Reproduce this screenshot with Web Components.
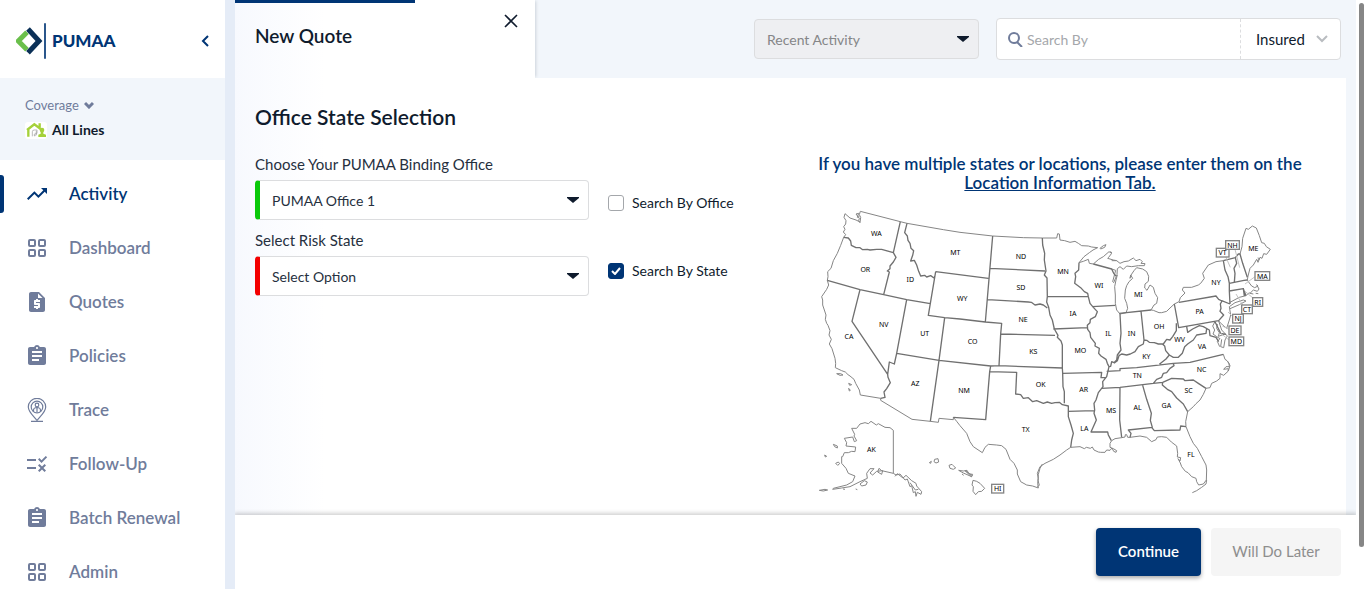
<!DOCTYPE html>
<html lang="en">
<head>
<meta charset="utf-8">
<title>PUMAA - New Quote</title>
<style>
  html, body { margin: 0; height: 100%; }
  body {
    --navy: #003575; --ink: #0f1b2d; --slate: #707c9b; --mist: #f2f6fb; --line: #dcdddf;
    font-family: Lato, "Open Sans", sans-serif; font-size: 15px; color: var(--ink); background: #fff;
  }
</style>
</head>
<body>
<quote-app></quote-app>
<script>
const ICONS = {
  trend: '<path d="M16 6l2.29 2.29-4.88 4.88-4-4L2 16.59 3.41 18l6-6 4 4 6.3-6.29L22 12V6z"/>',
  grid: '<g fill="none" stroke="currentColor" stroke-width="2"><rect x="4" y="4" width="6" height="6" rx="1"/><rect x="14" y="4" width="6" height="6" rx="1"/><rect x="4" y="14" width="6" height="6" rx="1"/><rect x="14" y="14" width="6" height="6" rx="1"/></g>',
  quote: '<path d="M14 2H6c-1.1 0-1.99.9-1.99 2L4 20c0 1.1.89 2 1.99 2H18c1.1 0 2-.9 2-2V8l-6-6zm1 10h-4v1h3c.55 0 1 .45 1 1v3c0 .55-.45 1-1 1h-1v1h-2v-1H9v-2h4v-1h-3c-.55 0-1-.45-1-1v-3c0-.55.45-1 1-1h1V9h2v1h2v2zm-2-4V3.5L17.5 8H13z"/>',
  clipboard: '<path d="M19 3h-4.18C14.4 1.84 13.3 1 12 1c-1.3 0-2.4.84-2.82 2H5c-1.1 0-2 .9-2 2v14c0 1.1.9 2 2 2h14c1.1 0 2-.9 2-2V5c0-1.1-.9-2-2-2zm-7 0c.55 0 1 .45 1 1s-.45 1-1 1-1-.45-1-1 .45-1 1-1zm2 14H7v-2h7v2zm3-4H7v-2h10v2zm0-4H7V7h10v2z"/>',
  pin: '<g fill="none" stroke="currentColor" stroke-width="1.2"><path d="M12 22.5C9 18.5 3.3 14 3.3 9a8.700 8.700 0 0 1 17.400 0c0 5-5.700 9.500-8.700 13.500z"/><circle cx="12" cy="9" r="5.800"/><circle cx="12" cy="7" r="1.800"/><path d="M8.500 13.500v-1c0-2 1.500-3 3.500-3s3.500 1 3.500 3v1M12 10v4M6 23.300h12"/></g>',
  rule: '<path d="M16.54 11L13 7.46l1.41-1.41 2.12 2.12 4.24-4.24 1.41 1.41L16.54 11zM11 7H2v2h9V7zm10 6.41L19.59 12 17 14.59 14.41 12 13 13.41 15.59 16 13 18.59 14.41 20 17 17.41 19.59 20 21 18.59 18.41 16 21 13.41zM11 15H2v2h9v-2z"/>'
};

class BaseElement extends HTMLElement {
  constructor() { super(); this.attachShadow({ mode: 'open' }); }
  connectedCallback() { this.shadowRoot.innerHTML = this.render(); }
}

customElements.define('brand-logo', class extends BaseElement {
  render() { return `<style>
    :host { display: flex; align-items: center; gap: 6px; color: var(--navy); font-size: 17px; font-weight: 900; line-height: 24px; }
    svg { display: block; }
    </style>
    <svg width="30" height="36" viewBox="0 0 90 108" aria-hidden="true" fill="none">
      <path d="M33 28L7 54l26 26" stroke="#6abf4b" stroke-width="15"/>
      <path d="M36 18l33 36-33 35" stroke="#0b3057" stroke-width="15"/>
      <path d="M87 1v106" stroke="#003575" stroke-width="5"/>
    </svg><span>PUMAA</span>`; }
});

customElements.define('nav-item', class extends BaseElement {
  render() { return `<style>
    :host { display: block; color: var(--slate); }
    a { display: flex; align-items: center; gap: 20px; height: 54px; padding-left: 25px; color: inherit; text-decoration: none;
        font-size: 17px; font-weight: 600; line-height: 24px; }
    :host([active]) { color: var(--navy); }
    :host([active]) a { padding-left: 0; }
    :host([active]) a::before { content: ""; width: 4px; height: 38px; margin-right: 1px; border-radius: 0 3px 3px 0; background: var(--navy); }
    svg { fill: currentColor; flex: none; }
    </style>
    <a href="#"><svg width="24" height="24" viewBox="0 0 24 24" aria-hidden="true">${ICONS[this.getAttribute('icon')]}</svg><slot></slot></a>`; }
});

customElements.define('side-bar', class extends BaseElement {
  render() { return `<style>
    :host { display: block; background: #fff; }
    header { display: flex; align-items: center; justify-content: space-between; height: 78px; padding: 4px 15px 0 16px; box-sizing: border-box; }
    button { font: inherit; border: 0; background: none; padding: 0; cursor: pointer; display: flex; }
    .coverage { display: flex; flex-direction: column; align-items: flex-start; gap: 5px; height: 82px; padding: 17px 25px 0; box-sizing: border-box; background: var(--mist); }
    .coverage button { align-items: center; gap: 5px; font-size: 13px; line-height: 20px; color: var(--slate); }
    .line { display: flex; align-items: center; gap: 5px; font-size: 14px; font-weight: 700; line-height: 20px; }
    nav { padding-top: 7px; }
    </style>
    <header><brand-logo></brand-logo>
      <button aria-label="Collapse menu"><svg width="10" height="14" viewBox="0 0 10 14" fill="none" stroke="#003575" stroke-width="2"><path d="M8 2L3 7l5 5"/></svg></button>
    </header>
    <section class="coverage">
      <button>Coverage <svg width="10" height="8" viewBox="0 0 10 8" fill="none" stroke="currentColor" stroke-width="3"><path d="M1 2l4 4 4-4"/></svg></button>
      <div class="line"><svg width="22" height="17" viewBox="0 0 66 51" aria-hidden="true"><rect width="66" height="51" rx="9" fill="#fff"/>
        <path d="M6 24L28 7l19 14M10 21v23M44 4v12" fill="none" stroke="#a5d13a" stroke-width="7"/><circle cx="51" cy="24" r="7" fill="#a5d13a"/><path d="M40 45v-7l7-3V26h8v9l8 3v7z" fill="#a5d13a"/>
        <path d="M22 43V29q0-5 6-5h8v10h-7M29 43v-6M34 27v12h-8" fill="none" stroke="#999" stroke-width="2"/></svg>All Lines</div>
    </section>
    <nav>
      <nav-item icon="trend" active>Activity</nav-item>
      <nav-item icon="grid">Dashboard</nav-item>
      <nav-item icon="quote">Quotes</nav-item>
      <nav-item icon="clipboard">Policies</nav-item>
      <nav-item icon="pin">Trace</nav-item>
      <nav-item icon="rule">Follow-Up</nav-item>
      <nav-item icon="clipboard">Batch Renewal</nav-item>
      <nav-item icon="grid">Admin</nav-item>
    </nav>`; }
});

customElements.define('select-field', class extends BaseElement {
  render() {
    const label = this.getAttribute('label');
    const hidden = this.hasAttribute('hide-label');
    return `<style>
    :host { display: block; }
    label { display: block; line-height: 20px; margin-bottom: 6px; color: #26303e; }
    .box { display: grid; align-items: center; }
    select, svg { grid-area: 1 / 1; }
    select { appearance: none; width: 100%; height: 40px; box-sizing: border-box; margin: 0; padding: 0 36px 0 12px; border: 1px solid var(--line);
      border-left: 5px solid var(--mark, var(--line)); border-radius: 4px; background: #fff; color: #26303e; font: inherit; font-size: 14px; opacity: 1; }
    :host([hide-label]) select { border-left-width: 1px; background: #eeeff2; color: #858688; }
    svg { justify-self: end; margin-right: 10px; pointer-events: none; }
    </style>
    ${hidden ? '' : `<label for="s">${label}</label>`}
    <div class="box"><select id="s" ${hidden ? `aria-label="${label}"` : ''}><option>${this.getAttribute('value')}</option></select>
    <svg width="12" height="6" viewBox="0 0 12 6" aria-hidden="true"><path d="M0 0h12v1L6 6 0 1z" fill="#0f1b2d"/></svg></div>`; }
});

customElements.define('check-field', class extends BaseElement {
  render() { return `<style>
    :host { display: block; }
    label { display: flex; align-items: center; gap: 8px; line-height: 20px; font-size: 14px; }
    input { appearance: none; display: grid; width: 16px; height: 16px; box-sizing: border-box; margin: 0; border: 1px solid #a4a7ab; border-radius: 3px; background: #fff; }
    input:checked { border-color: var(--navy); background: var(--navy); }
    span { display: grid; align-items: center; justify-items: center; }
    input, svg { grid-area: 1 / 1; }
    svg { pointer-events: none; }
    </style>
    <label><span><input type="checkbox" ${this.hasAttribute('checked') ? 'checked' : ''}>
    ${this.hasAttribute('checked') ? '<svg width="10" height="8" viewBox="0 0 10 8" fill="none" stroke="#fff" stroke-width="2"><path d="M1 4l3 3 5-6"/></svg>' : ''}</span><slot></slot></label>`; }
});

customElements.define('search-box', class extends BaseElement {
  render() { return `<style>
    :host { display: flex; align-items: center; width: 345px; height: 42px; box-sizing: border-box; border: 1px solid var(--line); border-radius: 4px; background: #fff; }
    .query { display: flex; flex: 1; align-items: center; gap: 4px; padding-left: 10px; min-width: 0; }
    input { flex: 1; min-width: 0; border: 0; padding: 0; background: none; font: inherit; font-size: 14px; outline: 0; }
    input::placeholder { color: #a5a7ab; opacity: 1; }
    .kind { display: grid; align-items: center; width: 100px; height: 40px; box-sizing: border-box; border-left: 1px dashed var(--line); }
    select, .kind svg { grid-area: 1 / 1; }
    select { appearance: none; width: 100%; height: 38px; border: 0; margin: 0; padding: 0 0 0 15px; background: none; font: inherit; color: var(--ink); }
    .kind svg { justify-self: end; margin-right: 12px; pointer-events: none; }
    </style>
    <div class="query"><svg width="16" height="16" viewBox="0 0 16 16" fill="none" stroke="#707c9b" stroke-width="2"><circle cx="7" cy="7" r="5"/><path d="M10 11l5 5"/></svg>
      <input type="search" aria-label="Search" placeholder="Search By"></div>
    <div class="kind"><select aria-label="Search type"><option>Insured</option></select>
      <svg width="12" height="8" viewBox="0 0 12 8" fill="none" stroke="#b9bcc0" stroke-width="2"><path d="M1 1l5 5 5-5"/></svg></div>`; }
});

customElements.define('top-bar', class extends BaseElement {
  render() { return `<style>
    :host { display: flex; justify-content: space-between; height: 78px; background: linear-gradient(90deg, transparent 300px, var(--mist) 300px); }
    .tab { display: flex; justify-content: space-between; align-items: flex-start; width: 300px; box-sizing: border-box; padding: 0 17px 0 20px;
      background: linear-gradient(var(--navy), var(--navy)) 0 0 / 180px 3px no-repeat; box-shadow: 2px 0 3px -1px #ccd2da; clip-path: inset(0 -5px 0 0); }
    h1 { margin: 24px 0 0; font-size: 19px; font-weight: 600; line-height: 24px; }
    button { border: 0; padding: 0; margin-top: 14px; background: none; display: flex; }
    .tools { display: flex; align-items: center; gap: 17px; padding-right: 15px; }
    select-field { width: 225px; }
    </style>
    <div class="tab"><h1>New Quote</h1><button aria-label="Close tab"><svg width="14" height="14" viewBox="0 0 14 14" stroke="#0f1b2d" stroke-width="1.6"><path d="M1 1l12 12M13 1L1 13"/></svg></button></div>
    <div class="tools"><select-field hide-label label="Recent activity" value="Recent Activity"></select-field><search-box></search-box></div>`; }
});

/* Map geometry is drawn on a 1500 x 915 grid, three units to the pixel. */
const STATE_LABELS = [
  ['WA',199,107],['MT',436,164],['OR',166,215],['ID',301,245],['WY',457,302],['NV',221,380],['UT',344,408],['CA',117,416],
  ['ND',633,176],['SD',633,269],['MN',759,222],['WI',867,263],['NE',639,365],['IA',789,347],['IL',895,407],['CO',488,433],
  ['KS',670,461],['MO',811,458],['OK',692,560],['AR',821,575],['NM',462,578],['MS',903,638],['LA',823,692],['TX',647,695],
  ['AZ',316,557],['AK',184,755],['MI',985,290],['OH',1047,386],['IN',965,407],['PA',1169,341],['WV',1109,427],['VA',1176,448],
  ['NY',1218,254],['ME',1330,152],['KY',1009,476],['TN',982,533],['NC',1175,515],['SC',1136,578],['AL',983,629],['GA',1069,623],['FL',1143,770]
];
const BOXED_LABELS = [
  ['VT',1219,145,38],['NH',1247,122,41],['MA',1335,215,44],['RI',1328,293,30],['CT',1295,315,32],['NJ',1268,343,32],['DE',1257,378,36],['MD',1257,411,44],['HI',545,853,36]
];
const COAST = `
M151 34L271 65 291 70 400 89 450 97 548 108 640 113 697 114 740 114 743 101 748 102 750 120 764 122 780 127 795 124 805 130 815 137 835 138 845 141 863 143 849 150 838 158 822 170 807 188 820 184 835 178 838 190 850 192 866 178 880 170 897 155 905 160 896 172 893 175 910 180 920 182
M870 145L880 137 888 134 884 142 872 147zM151 34L148 44 152 52 150 68 146 62 148 55 138 42 146 40 142 52 148 50M150 66L138 60 120 54 105 41 102 52 108 62 107 72 101 80 105 88 100 96 107 104 101 112 92 136 82 160 70 182 63 205 53 215 54 230 52 241 56 255 50 268 35 290 38 300 38 315 48 345 46 358 50 370 54 376 60 392 57 405 64 418 58 432 66 446 75 475 77 490 76 503 95 512 106 516 114 524 120 528 132 538 137 550 148 570 151 585 212 595 212 601 306 658 361 664 385 667 387 655 430 659 430 652 440 664 450 677 470 700 480 725 490 740 517 758 525 742 535 733 560 735 575 737 588 748 600 778 612 790 622 810 622 822 632 845 650 855 668 858 685 864 683 850 685 835 682 820 690 800 705 790 730 778 750 765 770 750 782 742 810 740 823 746 829 742 841 745 847 741 852 750 865 756 872 757 885 757 890 750 900 751 906 744 911 754 918 757 920 752 910 746 900 742 900 730 905 722 915 716 935 713
M80 521L92 521 99 525 90 526zM116 550L125 554 119 556zM116 565L121 571 118 573z
M682 860L688 856 684 841 685 823 690 805 697 792M935 713L945 711 946 704 950 704 953 712 960 712 990 708 1010 712 1025 725 1038 719 1042 711 1055 710 1070 712 1084 726 1100 738 1103 760 1102 771 1112 773 1110 783 1104 776 1111 789 1115 800 1126 814 1134 818 1145 830 1158 835 1160 845 1166 855 1180 852 1189 840 1190 810 1188 795 1175 770 1162 745 1150 730 1140 710 1128 680 1127 665 1133 635 1150 620 1158 611 1170 600 1180 583 1188 565 1200 563 1205 550 1220 543 1230 535 1230 521 1241 526 1254 514 1255 506 1241 508 1248 500 1258 500 1257 490 1251 482 1245 478 1240 463
M1190 840L1188 852 1175 862 1160 872 1147 878M1253 484L1260 497 1255 513
M922 225L918 240 914 260 916 285 916 310 920 330 930 342 948 338 953 325 950 310 944 295 946 270 950 257 957 245 968 235 962 225 960 235 963 225 972 212 980 203 998 207 1010 215 1016 229 1015 244 1005 252 1004 264 1011 271 1020 255 1030 262 1035 280 1043 293 1040 310 1032 315 1023 330 1030 331 1047 338 1055 338 1070 334 1080 324 1093 312 1107 305 1111 293 1125 279 1117 270 1120 262 1145 262 1165 255 1172 250 1183 235 1178 220 1195 195 1218 185 1240 182
M900 155L906 158M905 182L920 182 930 190 942 185 955 183 970 174 978 182 990 178 997 185 993 190 1005 191 1003 197 985 197 965 200 950 198 940 208 930 200 922 206 921 224 911 248 908 245 917 211 905 207
M1290 162L1296 140 1298 115 1308 85 1315 88 1327 78 1339 84 1348 107 1355 128 1363 130 1369 140 1381 148 1370 163 1361 161 1356 175 1350 172 1344 187 1340 178 1330 195 1320 205 1314 228 1312 240 1318 249 1325 258 1334 263 1344 258 1340 254 1347 267 1342 274 1330 270 1322 278 1315 280 1308 287 1288 292 1260 307M1258 320L1275 308 1300 300 1308 303 1288 314 1260 326M1258 320L1262 345 1258 360 1250 385 1238 375 1226 363 1235 390 1252 408 1245 420 1241 443 1232 440 1235 418M1215 365L1208 378 1214 390 1209 402 1220 410 1230 416 1222 424 1229 440M1222 372L1220 385 1228 398 1225 409 1245 402
M1320 280L1330 282M1337 280L1345 281M1343 174L1350 176 1342 182M70 865L90 860 110 855 128 845 135 828 115 820 108 805 95 790 95 770 98 770 103 758 115 758 125 754 135 755 137 741 108 738 110 728 103 715 128 711 133 725 140 722 132 708 134 703 125 685 140 685 150 672 165 668 175 671 183 664 199 675 205 671 225 682 240 683 250 691V820L215 812 207 805 203 816 215 823 218 812 200 814 188 825 180 819 192 806 180 806 170 820 172 835 150 845 120 860 95 864 68 868z
M150 852L163 842 172 846 168 855 155 858zM250 820L258 825 270 822 285 840 292 837 300 860 305 857 310 878 316 875 318 889 322 877 333 883 335 875 320 858 318 850 305 842 288 826 279 834 262 821 255 829M300 848L316 870 325 868M28 871L45 868 53 870 40 873zM70 733L82 738 82 744 74 740zM44 765L50 769 46 771zM77 790L85 786 89 791 83 796zM99 867L105 868M137 867L142 869
M358 788L364 784 362 790zM374 778L384 776 386 786 378 789 372 785zM417 796L426 793 430 797 437 804 430 808 420 805zM446 811L460 813 471 811 476 820 487 826 485 830 460 819zM456 822L461 826M465 812L480 822 488 823 484 830zM489 841L500 844 510 850 524 865 515 874 505 875 497 884 489 874 490 860 486 855z`;
const BORDERS = `
M101 112L115 114 122 123 124 136 138 143 150 143 158 149 172 148 180 150 200 148 215 148 250 158L258 172 250 186 240 198 240 206 232 213 238 216 221 284M271 65L250 158M52 241L150 269 221 284 290 299 361 311M291 70L284 98 292 108 294 121 300 130 303 145 311 152 308 166 302 183 313 181 320 195 326 214 332 228 344 226 350 231 362 227 372 234 375 227M377 215L355 346 404 353 450 357 526 366 575 370 572 402 567 497M377 215L535 235M548 108L526 366M539 205L705 213M533 299L655 306 664 307 675 315 690 312 700 315 712 324M572 402L735 406
M697 114L698 135 704 160 703 180 708 213 703 225 711 234 712 290 710 306 716 322 720 345 727 360 733 387 744 406 742 412 753 423 757 435V504L758 520 759 560 763 575V610M712 290L834 289M730 387L832 383M150 269L126 364 233 523M290 299L260 460 253 492 238 486 233 523 234 532 241 548 230 566 222 576 225 592 212 595M404 353L387 481 361 664M260 460L387 481 542 498 567 497 757 504M542 498L539 515 527 659 430 652M539 515L620 517 617 582 632 584 640 595 655 593 668 605 680 602 700 610 712 606 725 610 735 608 748 607 757 614 775 618V650L783 675 790 700 785 720 782 742M775 634L852 632
M758 520L875 517 873 533 886 533M807 188L806 210 795 220 797 230 794 250 812 263 823 275 833 280 835 290 840 310 850 322 862 335 856 350 841 358 840 368 832 376 833 388 840 398 842 412 856 430 855 438 868 445 866 460 873 468 888 478 892 490 897 500 890 530 878 545 879 560 865 578 858 600 852 610 854 630 852 640 859 660 850 680 843 696 893 696 895 705 904 722M850 192L905 207 911 220 918 228M847 320L916 316M930 342L933 400 930 430 933 450 922 465 920 480 912 488 905 485 902 499 897 500M928 340L1023 330M993 333L1002 420 1000 432 985 440 975 455 961 462 950 465 935 462 927 467 922 482 912 490M1002 420L1010 421 1018 427 1033 428 1045 432 1060 432 1070 418 1080 420 1088 410 1099 392 1099 370M1093 312L1106 383 1226 362 1241 345 1230 334 1233 325 1231 312 1236 303 1226 298 1218 288 1107 307M1235 302L1260 312
M890 514L930 512 930 506 980 503 1090 490 1140 487 1240 463M875 565L930 562 1030 550 1058 547 1085 535 1120 537 1125 542 1150 540 1165 550 1188 565M1090 490L1092 497 1080 505 1070 518 1060 520 1055 532 1040 538 1030 550M1058 547L1057 555 1072 568 1085 575 1100 594 1120 612 1133 635M930 563L929 660 935 712M998 556L1010 598 1024 640 1021 661 1027 682 955 690 963 700 960 712M1025 682L1033 692 1110 690 1112 678 1128 680M1048 493L1068 477 1078 465 1067 452 1064 438 1057 432M1078 465L1090 472 1105 472 1117 460 1124 440 1133 432 1150 420 1160 405 1188 400 1190 386M1130 380L1133 397 1148 387 1168 377 1180 380 1198 390 1200 407 1218 412 1226 425M1240 182L1245 210 1254 230 1258 250V273L1260 312M1240 182L1276 173 1285 162 1290 162 1298 190 1312 232M1276 173L1280 190 1272 205 1275 220 1273 248M1258 250L1302 241 1312 240M1258 273L1300 266 1308 287M1300 266L1303 288M1215 365L1232 400 1248 403`;

customElements.define('state-map', class extends BaseElement {
  render() { return `<style>
    :host { display: block; }
    svg { display: block; width: 100%; height: auto; font-family: "Noto Sans", sans-serif; font-size: 21px; text-anchor: middle; fill: #000; }
    </style>
    <svg viewBox="0 0 1500 915" role="img" aria-label="Map of the United States">
      <g fill="none" stroke-linejoin="round"><path d="${COAST}" stroke="#868686" stroke-width="3"/><path d="${BORDERS}" stroke="#707070" stroke-width="4"/>
      <path d="M1247 170l14 32M1275 148l14 55M1335 230l-30 22M1330 295l-26-22M1300 318l-22-36M1268 350l-14-14M1257 388l-20-10M1257 420l-25-20" stroke="#c4c4c4" stroke-width="3"/></g>
      ${BOXED_LABELS.map(([t, x, y, w]) => `<rect x="${x}" y="${y}" width="${w}" height="26" fill="#fff" stroke="#858585" stroke-width="4"/><text x="${x + w / 2}" y="${y + 21}">${t}</text>`).join('')}
      ${STATE_LABELS.map(([t, x, y]) => `<text x="${x}" y="${y}">${t}</text>`).join('')}
    </svg>`; }
});

customElements.define('office-form', class extends BaseElement {
  render() { return `<style>
    :host { display: block; padding: 27px 36px 0 20px; }
    h2 { margin: 0 0 25px; font-size: 21px; font-weight: 600; line-height: 24px; }
    .row { display: flex; align-items: flex-start; }
    .fields { display: grid; gap: 10px; width: 334px; }
    .checks { display: grid; gap: 48px; padding: 39px 0 0 19px; }
    .map { width: 500px; margin-left: auto; }
    p { margin: 0 0 8px; text-align: center; font-size: 17px; font-weight: 600; line-height: 19px; color: var(--navy); }
    a { color: inherit; }
    .ok { --mark: #0ac90a; } .missing { --mark: #f40000; }
    </style>
    <h2>Office State Selection</h2>
    <div class="row">
      <div class="fields">
        <select-field class="ok" label="Choose Your PUMAA Binding Office" value="PUMAA Office 1"></select-field>
        <select-field class="missing" label="Select Risk State" value="Select Option"></select-field>
      </div>
      <div class="checks"><check-field>Search By Office</check-field><check-field checked>Search By State</check-field></div>
      <div class="map"><p>If you have multiple states or locations, please enter them on the <a href="#">Location Information Tab.</a></p><state-map></state-map></div>
    </div>`; }
});

customElements.define('action-bar', class extends BaseElement {
  render() { return `<style>
    :host { display: flex; justify-content: flex-end; gap: 10px; height: 74px; box-sizing: border-box; padding: 13px 15px; background: #fff; box-shadow: 0 -1px 4px 1px rgb(0 0 0 / 18%); }
    button { height: 48px; border: 0; border-radius: 4px; padding: 0 0 2px; font: inherit; width: 130px; background: #f5f5f5; color: #8e8e8e; }
    .go { width: 105px; background: var(--navy); color: #fff; font-weight: 600; box-shadow: 0 2px 4px rgb(0 0 0 / 35%); }
    </style><button class="go">Continue</button><button>Will Do Later</button>`; }
});

customElements.define('quote-app', class extends BaseElement {
  render() { return `<style>
    :host { display: grid; grid-template-columns: 225px 10px minmax(0, 1fr) 10px; grid-template-rows: minmax(0, 1fr); height: 100vh; overflow: hidden; }
    .edge { background: #e5ecf7; }
    main { display: flex; flex-direction: column; min-width: 0; background: linear-gradient(90deg, #f7f9fe, #fff 90px); }
    .content { flex: 1; min-height: 0; overflow: hidden; background: linear-gradient(var(--mist), var(--mist)) 100% 0 / 10px 100% no-repeat; }
    office-form { margin-right: 10px; }
    action-bar { position: relative; clip-path: inset(-8px 0 0 0); }
    .track { padding: 3px 2px 42px 3px; }
    .thumb { height: 100%; border-radius: 3px; background: #868686; }
    </style>
    <side-bar></side-bar><div class="edge"></div>
    <main><top-bar></top-bar><div class="content"><office-form></office-form></div><action-bar></action-bar></main>
    <div class="track"><div class="thumb"></div></div>`; }
});
</script>
</body>
</html>
